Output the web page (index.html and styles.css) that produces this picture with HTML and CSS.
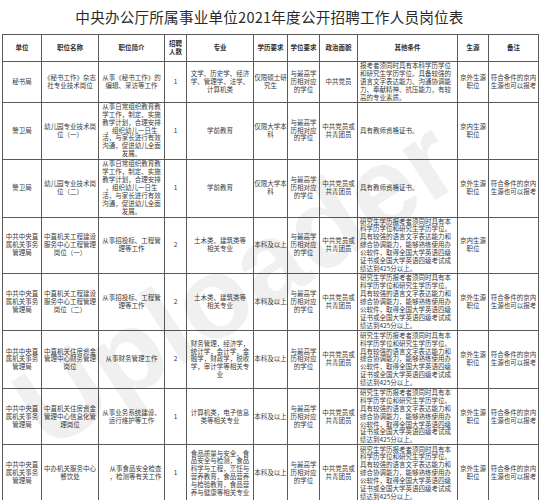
FILE: index.html
```html
<!DOCTYPE html>
<html lang="zh">
<head>
<meta charset="utf-8">
<link rel="stylesheet" href="styles.css">
</head>
<body>
<div class="page">
  <h1 class="title">中央办公厅所属事业单位2021年度公开招聘工作人员岗位表</h1>
  <table class="grid">
    <colgroup>
      <col class="c1"><col class="c2"><col class="c3"><col class="c4"><col class="c5"><col class="c6"><col class="c7"><col class="c8"><col class="c9"><col class="c10"><col class="c11">
    </colgroup>
    <tr class="hd">
      <th>单位</th><th>职位名称</th><th>职位简介</th><th>招聘<br>人数</th><th>专业</th><th>学历要求</th><th>学位要求</th><th>政治面貌</th><th>其他条件</th><th>生源</th><th>备注</th>
    </tr>
    <tr class="r1">
      <td>秘书局</td>
      <td>《秘书工作》杂志<br>社专业技术岗位</td>
      <td>从事《秘书工作》的<br>编辑、采访等工作</td>
      <td>1</td>
      <td>文学、历史学、经济<br>学、管理学、法学、<br>计算机类</td>
      <td>仅限硕士研<br>究生</td>
      <td>与最高学<br>历相对应<br>的学位</td>
      <td>中共党员</td>
      <td class="left">报考者须同时具有本科学历学位<br>和研究生学历学位。具备较强的<br>语言文字表达能力、沟通协调能<br>力、奉献精神、抗压能力，有较<br>高的专业素质。</td>
      <td>京外生源<br>职位</td>
      <td>符合条件的京内<br>生源也可以报考</td>
    </tr>
    <tr class="r2">
      <td>警卫局</td>
      <td>幼儿园专业技术岗<br>位（一）</td>
      <td>从事日常组织教育教<br>学工作，制定、实施<br>教学计划，合理安排<br>，组织幼儿一日生<br>活，与家长进行有效<br>沟通，促进幼儿全面<br>发展。</td>
      <td>1</td>
      <td>学前教育</td>
      <td>仅限大学本<br>科</td>
      <td>与最高学<br>历相对应<br>的学位</td>
      <td>中共党员或<br>共青团员</td>
      <td class="left">具有教师资格证书。</td>
      <td>京内生源<br>职位</td>
      <td></td>
    </tr>
    <tr class="r3">
      <td>警卫局</td>
      <td>幼儿园专业技术岗<br>位（二）</td>
      <td>从事日常组织教育教<br>学工作，制定、实施<br>教学计划，合理安排<br>，组织幼儿一日生<br>活，与家长进行有效<br>沟通，促进幼儿全面<br>发展。</td>
      <td>1</td>
      <td>学前教育</td>
      <td>仅限大学本<br>科</td>
      <td>与最高学<br>历相对应<br>的学位</td>
      <td>中共党员或<br>共青团员</td>
      <td class="left">具有教师资格证书。</td>
      <td>京外生源<br>职位</td>
      <td>符合条件的京内<br>生源也可以报考</td>
    </tr>
    <tr class="r4">
      <td>中共中央直<br>属机关事务<br>管理局</td>
      <td>中直机关工程建设<br>服务中心工程管理<br>岗位（一）</td>
      <td>从事招投标、工程管<br>理等工作</td>
      <td>2</td>
      <td>土木类、建筑类等<br>相关专业</td>
      <td>本科及以上</td>
      <td>与最高学<br>历相对应<br>的学位</td>
      <td>中共党员或<br>共青团员</td>
      <td class="left">研究生学历报考者须同时具有本<br>科学历学位和研究生学历学位。<br>具有较强的语言文字表达能力和<br>综合协调能力，能够熟练使用办<br>公软件，取得全国大学英语四级<br>证书或全国大学英语四级考试成<br>绩达到425分以上。</td>
      <td>京内生源<br>职位</td>
      <td></td>
    </tr>
    <tr class="r5">
      <td>中共中央直<br>属机关事务<br>管理局</td>
      <td>中直机关工程建设<br>服务中心工程管理<br>岗位（二）</td>
      <td>从事招投标、工程管<br>理等工作</td>
      <td>2</td>
      <td>土木类、建筑类等<br>相关专业</td>
      <td>本科及以上</td>
      <td>与最高学<br>历相对应<br>的学位</td>
      <td>中共党员或<br>共青团员</td>
      <td class="left">研究生学历报考者须同时具有本<br>科学历学位和研究生学历学位。<br>具有较强的语言文字表达能力和<br>综合协调能力，能够熟练使用办<br>公软件，取得全国大学英语四级<br>证书或全国大学英语四级考试成<br>绩达到425分以上。</td>
      <td>京外生源<br>职位</td>
      <td>符合条件的京内<br>生源也可以报考</td>
    </tr>
    <tr class="r6">
      <td>中共中央直<br>属机关事务<br>管理局</td>
      <td>中直机关住房资金<br>管理中心财务管理<br>岗位</td>
      <td>从事财务管理工作</td>
      <td>2</td>
      <td>财务管理，经济学，<br>统计学，会计学，金<br>融学，财政学，税收<br>学，审计学等相关专<br>业</td>
      <td>本科及以上</td>
      <td>与最高学<br>历相对应<br>的学位</td>
      <td>中共党员或<br>共青团员</td>
      <td class="left">研究生学历报考者须同时具有本<br>科学历学位和研究生学历学位。<br>具有较强的语言文字表达能力和<br>综合协调能力，能够熟练使用办<br>公软件，取得全国大学英语四级<br>证书或全国大学英语四级考试成<br>绩达到425分以上。</td>
      <td>京外生源<br>职位</td>
      <td>符合条件的京内<br>生源也可以报考</td>
    </tr>
    <tr class="r7">
      <td>中共中央直<br>属机关事务<br>管理局</td>
      <td>中直机关住房资金<br>管理中心信息化管<br>理岗位</td>
      <td>从事业务系统建设、<br>运行维护等工作</td>
      <td>1</td>
      <td>计算机类，电子信息<br>类等相关专业</td>
      <td>本科及以上</td>
      <td>与最高学<br>历相对应<br>的学位</td>
      <td>中共党员或<br>共青团员</td>
      <td class="left">研究生学历报考者须同时具有本<br>科学历学位和研究生学历学位。<br>具有较强的语言文字表达能力和<br>综合协调能力，能够熟练使用办<br>公软件，取得全国大学英语四级<br>证书或全国大学英语四级考试成<br>绩达到425分以上。</td>
      <td>京外生源<br>职位</td>
      <td>符合条件的京内<br>生源也可以报考</td>
    </tr>
    <tr class="r8">
      <td>中共中央直<br>属机关事务<br>管理局</td>
      <td>中办机关服务中心<br>餐饮处</td>
      <td class="shift">从事食品安全检查<br>，检测等有关工作</td>
      <td>1</td>
      <td>食品质量与安全，食<br>品安全与检测，食品<br>科学与工程，烹饪与<br>营养教育，食品营养<br>与检验教育，食品营<br>养与健康等相关专业</td>
      <td>本科及以上</td>
      <td>与最高学<br>历相对应<br>的学位</td>
      <td>中共党员或<br>共青团员</td>
      <td class="left">研究生学历报考者须同时具有本<br>科学历学位和研究生学历学位。<br>具有较强的语言文字表达能力和<br>综合协调能力，能够熟练使用办<br>公软件，取得全国大学英语四级<br>证书或全国大学英语四级考试成<br>绩达到425分以上。</td>
      <td>京外生源<br>职位</td>
      <td>符合条件的京内<br>生源也可以报考</td>
    </tr>
  </table>
  <div class="watermark">Uploader</div>
</div>
</body>
</html>
```
FILE: styles.css
```css
html, body {
  margin: 0;
  padding: 0;
  background: #ffffff;
}
.page {
  position: relative;
  width: 539px;
  height: 500px;
  overflow: hidden;
  font-family: "Noto Sans CJK SC", "Noto Sans", sans-serif;
  color: #3a3a3a;
}
.title {
  margin: 0;
  height: 34px;
  line-height: 34px;
  font-size: 14.6px;
  font-weight: 400;
  color: #2a2a2a;
  text-align: center;
  letter-spacing: 0.2px;
}
.grid {
  margin-left: 2px;
  width: 536px;
  table-layout: fixed;
  border-collapse: collapse;
  font-size: 6.5px;
  line-height: 7.9px;
}
.c1 { width: 39px; }
.c2 { width: 57px; }
.c3 { width: 66px; }
.c4 { width: 22px; }
.c5 { width: 67px; }
.c6 { width: 34px; }
.c7 { width: 32px; }
.c8 { width: 38px; }
.c9 { width: 100px; }
.c10 { width: 31px; }
.c11 { width: 50px; }
.grid th, .grid td {
  border: 1px solid #5a5a5a;
  padding: 0;
  text-align: center;
  vertical-align: middle;
  white-space: nowrap;
  overflow: visible;
}
.grid th {
  font-weight: 700;
  color: #2e2e2e;
}
.grid td.left {
  text-align: left;
  padding-left: 2px;
}
.grid td.shift {
  padding-left: 8px;
}
.hd { height: 27px; }
.r1 { height: 40px; }
.r2 { height: 57px; }
.r3 { height: 58px; }
.r4 { height: 55px; }
.r5 { height: 57px; }
.r6 { height: 58px; }
.r7 { height: 56px; }
.r8 { height: 57px; }
.watermark {
  position: absolute;
  left: 58px;
  top: 352px;
  font-family: "Liberation Sans", sans-serif;
  font-size: 115px;
  font-weight: 700;
  line-height: 115px;
  color: rgba(0, 0, 0, 0.06);
  transform: rotate(-33deg);
  transform-origin: 0 100%;
  white-space: nowrap;
  pointer-events: none;
}
```
